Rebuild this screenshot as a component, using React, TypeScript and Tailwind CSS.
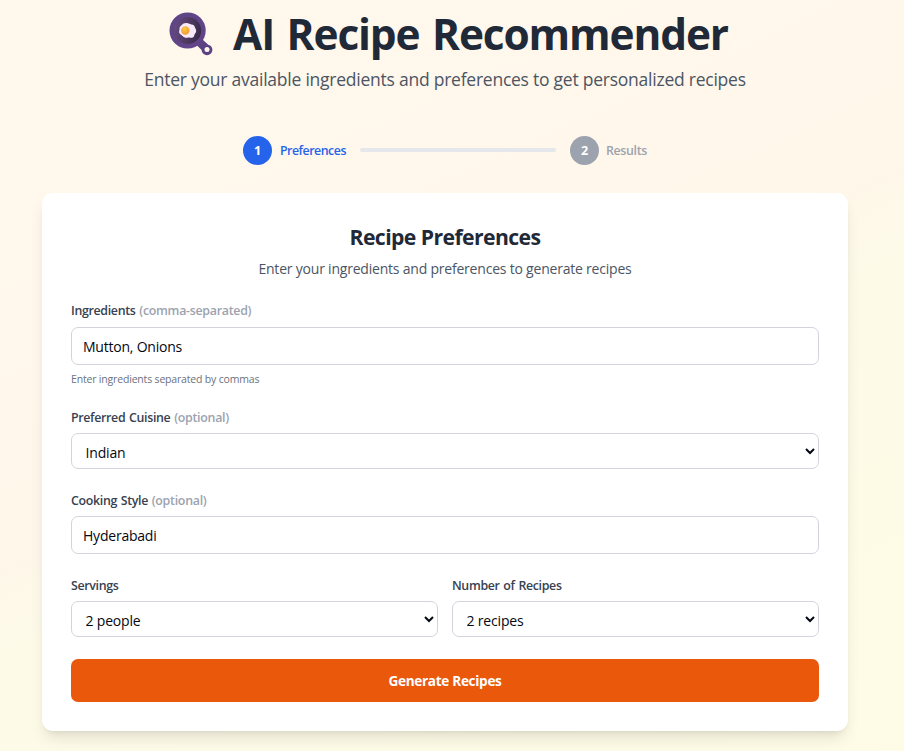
import type { ReactNode } from "react";

function PanIcon() {
  return (
    <svg className="h-[44px] w-[44px] shrink-0" viewBox="0 0 44 44" fill="none">
      <defs>
        <linearGradient id="pan" x1="6" y1="4" x2="28" y2="34" gradientUnits="userSpaceOnUse">
          <stop stopColor="#5d4686" />
          <stop offset="1" stopColor="#624388" />
        </linearGradient>
        <linearGradient id="inner" x1="6" y1="16" x2="32" y2="22" gradientUnits="userSpaceOnUse">
          <stop stopColor="#63497c" />
          <stop offset="1" stopColor="#392a49" />
        </linearGradient>
        <radialGradient id="yolk" cx="0.4" cy="0.3" r="0.7">
          <stop stopColor="#ffcb45" />
          <stop offset="1" stopColor="#f29a2e" />
        </radialGradient>
      </defs>
      <path d="M28 33.5 L33.2 38.5 L39 32.6 L33.5 27.5 Z" fill="#5c4283" />
      <circle cx="38" cy="37.8" r="5.4" fill="#5c4283" />
      <circle cx="38" cy="37.6" r="2.5" fill="#fff7ec" />
      <circle cx="18.6" cy="18.5" r="18.1" fill="url(#pan)" />
      <circle cx="18.6" cy="18.5" r="13.6" fill="url(#inner)" />
      <path
        d="M14 11.8 C16.5 10.4 19 11.2 21 11.9 C22.8 12.5 25.3 12.6 25.7 14.8 C25.9 16.2 27.4 17.4 27.2 19.2 C27 21 25.5 21.6 25.3 23.2 C25 25.6 22.5 26.2 20.7 25.6 C18.8 25 17.8 26.2 15.8 25.6 C14 25 13.5 23.5 12 22.8 C10 21.8 9.7 20 10.4 18.3 C10.8 17.3 10.2 16.3 10.8 15.2 C11.5 13.7 12.7 13.6 14 11.8 Z"
        fill="#f7ebfb"
      />
      <circle cx="16.3" cy="18.5" r="4.2" fill="url(#yolk)" />
    </svg>
  );
}

function Label({ children, note }: { children: ReactNode; note?: string }) {
  return (
    <label className="block h-[18px] whitespace-nowrap pt-px text-[12.4px] leading-[18px] font-semibold tracking-[-0.33px] [word-spacing:0.8px] text-[#374151]">
      {children}
      {note && <span className="tracking-[-0.28px] text-[#9ca3af]"> {note}</span>}
    </label>
  );
}

function TextField({ value }: { value: string }) {
  return (
    <input
      readOnly
      value={value}
      className="block h-[38px] w-full rounded-[7px] border border-[#d1d5db] bg-white px-[11px] pt-px text-[14px] tracking-[-0.22px] text-[#030712]"
    />
  );
}

function SelectField({ value }: { value: string }) {
  return (
    <select className="block h-[36px] w-full rounded-[7px] border border-[#d1d5db] bg-white pt-[2px] pr-[10px] pl-[9.5px] text-[14px] tracking-[-0.18px] text-[#030712]">
      <option>{value}</option>
    </select>
  );
}

export default function App() {
  return (
    <div className="h-[751px] overflow-hidden bg-[linear-gradient(156deg,#fff8ed_0%,#fff7ea_48%,#fdfae8_57%,#fefbe6_100%)] font-['Open_Sans','Noto_Sans',sans-serif]">
      <div className="ml-[42px] w-[806px]">
        <header className="flex flex-col items-center pt-[10px]">
          <h1 className="flex h-[48px] items-center gap-[20px] whitespace-nowrap pl-[7px] text-[42.4px] leading-[48px] font-bold tracking-[-1.13px] [word-spacing:2.7px] text-[#1f2937]">
            <PanIcon />
            <span>AI Recipe Recommender</span>
          </h1>
          <p className="mt-[7px] h-[29px] whitespace-nowrap text-[17.5px] leading-[28px] tracking-[-0.24px] text-[#4b5563]">
            Enter your available ingredients and preferences to get personalized recipes
          </p>
        </header>

        <div className="mt-[42px] flex h-[29px] items-center pl-[201px]">
          <div className="flex size-[29px] items-center justify-center rounded-full bg-[#2563eb] pt-px text-[12.6px] font-bold text-white">1</div>
          <span className="ml-[8px] w-[80px] whitespace-nowrap pt-px text-[12.4px] font-semibold tracking-[-0.5px] text-[#2563eb]">Preferences</span>
          <div className="-mt-px h-[4px] w-[196px] rounded-full bg-[#e5e7eb]" />
          <div className="ml-[14px] flex size-[29px] items-center justify-center rounded-full bg-[#9ca3af] pt-px text-[12.6px] font-bold text-white">2</div>
          <span className="ml-[7px] whitespace-nowrap pt-px text-[12.4px] font-semibold tracking-[-0.35px] text-[#9ca3af]">Results</span>
        </div>

        <main className="mt-[28px] h-[538px] rounded-[11px] bg-white px-[29px] pt-[29px] shadow-lg">
          <h2 className="h-[30px] whitespace-nowrap text-center text-[21.2px] leading-[30px] font-bold tracking-[-0.58px] text-[#1f2937]">Recipe Preferences</h2>
          <p className="mt-[6px] h-[23px] whitespace-nowrap text-center text-[14px] leading-[22px] tracking-[-0.21px] text-[#4b5563]">
            Enter your ingredients and preferences to generate recipes
          </p>

          <div className="mt-[20px] flex flex-col gap-[8px]">
            <Label note="(comma-separated)">Ingredients</Label>
            <TextField value="Mutton, Onions" />
          </div>
          <p className="mt-[6px] h-[16px] whitespace-nowrap text-[10.5px] leading-[16px] tracking-[-0.18px] text-[#6b7280]">Enter ingredients separated by commas</p>

          <div className="mt-[21px] flex flex-col gap-[7px]">
            <Label note="(optional)">Preferred Cuisine</Label>
            <SelectField value="Indian" />
          </div>

          <div className="mt-[22px] flex flex-col gap-[7px]">
            <Label note="(optional)">Cooking Style</Label>
            <TextField value="Hyderabadi" />
          </div>

          <div className="mt-[22px] grid grid-cols-2 gap-[14px]">
            <div className="flex flex-col gap-[7px]">
              <Label>Servings</Label>
              <SelectField value="2 people" />
            </div>
            <div className="flex flex-col gap-[7px]">
              <Label>Number of Recipes</Label>
              <SelectField value="2 recipes" />
            </div>
          </div>

          <button className="mt-[22px] h-[43px] w-full rounded-[7px] bg-[#ea580c] pt-[2px] text-[13.6px] font-bold tracking-[-0.32px] text-white">Generate Recipes</button>
        </main>
      </div>
    </div>
  );
}
